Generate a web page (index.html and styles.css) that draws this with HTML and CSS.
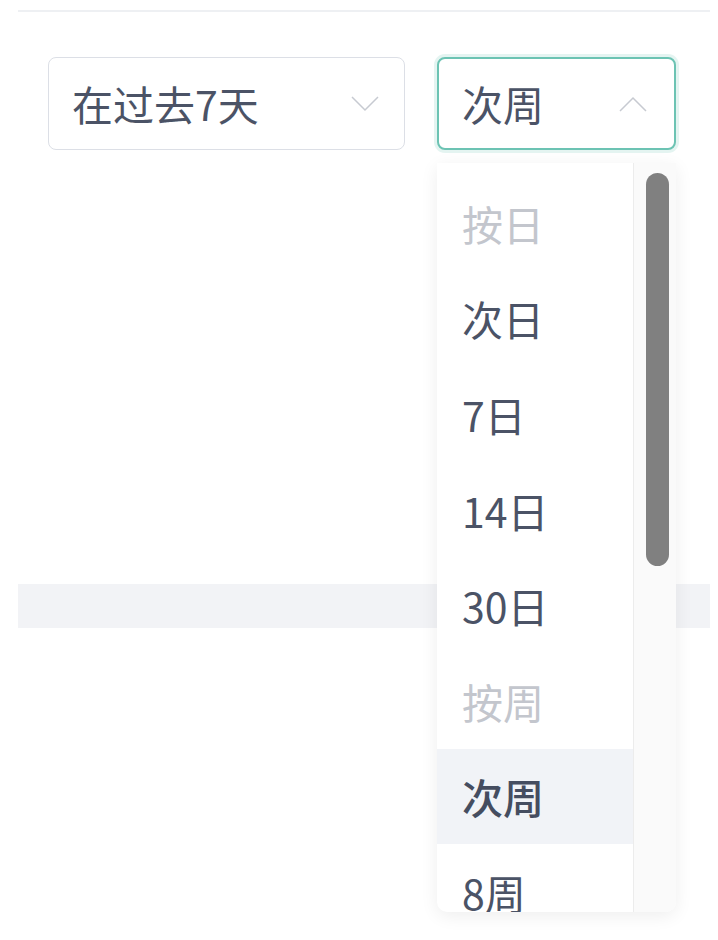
FILE: index.html
```html
<!DOCTYPE html>
<html lang="zh-CN">
<head>
<meta charset="utf-8">
<title>选择</title>
<link rel="stylesheet" href="styles.css">
</head>
<body>
<div class="page">
  <div class="topline"></div>
  <div class="filters">
    <div class="select select-left">
      <span class="select-text">在过去7天</span>
      <svg class="chevron" width="30" height="18" viewBox="0 0 30 18"><path d="M2 2 L15 15 L28 2" fill="none" stroke="#c7cad1" stroke-width="1.5"/></svg>
    </div>
    <div class="select-wrap">
      <div class="select select-right">
        <span class="select-text">次周</span>
        <svg class="chevron" width="30" height="18" viewBox="0 0 30 18"><path d="M2 16 L15 3 L28 16" fill="none" stroke="#c7cad1" stroke-width="1.5"/></svg>
      </div>
      <div class="dropdown">
        <ul class="options">
          <li class="option disabled">按日</li>
          <li class="option">次日</li>
          <li class="option">7日</li>
          <li class="option">14日</li>
          <li class="option">30日</li>
          <li class="option disabled">按周</li>
          <li class="option selected">次周</li>
          <li class="option">8周</li>
        </ul>
        <div class="scrolltrack"><div class="scrollthumb"></div></div>
      </div>
    </div>
  </div>
  <div class="band"></div>
</div>
</body>
</html>
```

FILE: styles.css
```css
html, body {
  margin: 0;
  padding: 0;
  background: #ffffff;
}
body {
  min-height: 940px;
  font-family: "Noto Sans CJK SC", "Noto Sans", sans-serif;
  color: #4b5366;
}
.page {
  margin-left: 18px;
  width: 692px;
  min-height: 940px;
}
.topline {
  height: 2px;
  margin-top: 10px;
  background: #eef0f3;
}
.filters {
  display: flex;
  gap: 32px;
  padding: 45px 0 0 30px;
}
.select {
  box-sizing: border-box;
  height: 93px;
  border: 1.5px solid #dcdfe6;
  border-radius: 8px;
  display: flex;
  align-items: center;
  justify-content: space-between;
  padding: 0 24px 0 23px;
  background: #fff;
}
.select-left {
  width: 357px;
}
.select-wrap {
  position: relative;
  width: 239px;
}
.select-right {
  width: 239px;
  border: 2px solid #6cc3b3;
  box-shadow: 0 0 0 3px rgba(108, 195, 179, 0.18);
  padding-right: 26px;
}
.select-text {
  font-size: 41px;
  line-height: 1;
  color: #4b5366;
}
.chevron {
  display: block;
}
.dropdown {
  position: absolute;
  left: 0;
  top: calc(100% + 13px);
  width: 239px;
  height: 749px;
  background: #fff;
  border-radius: 0 0 10px 10px;
  box-shadow: 0 4px 18px rgba(0, 0, 0, 0.07);
  display: flex;
  overflow: hidden;
  z-index: 5;
}
.options {
  list-style: none;
  margin: 0;
  padding: 12px 0 0 0;
  flex: 1;
  overflow: hidden;
}
.option {
  height: 95.6px;
  display: flex;
  align-items: center;
  padding-left: 25px;
  font-size: 41px;
  color: #4b5366;
}
.option.disabled {
  color: #c3c6cd;
}
.option.selected {
  background: #f1f3f7;
  font-weight: 500;
  color: #454d60;
}
.scrolltrack {
  width: 43px;
  background: #fafafa;
  border-left: 1.5px solid #ececec;
  padding: 10px 0 0 12px;
  box-sizing: border-box;
}
.scrollthumb {
  width: 23px;
  height: 393px;
  border-radius: 12px;
  background: #808080;
}
.band {
  margin-top: 434px;
  height: 44px;
  background: #f2f3f6;
}
```
